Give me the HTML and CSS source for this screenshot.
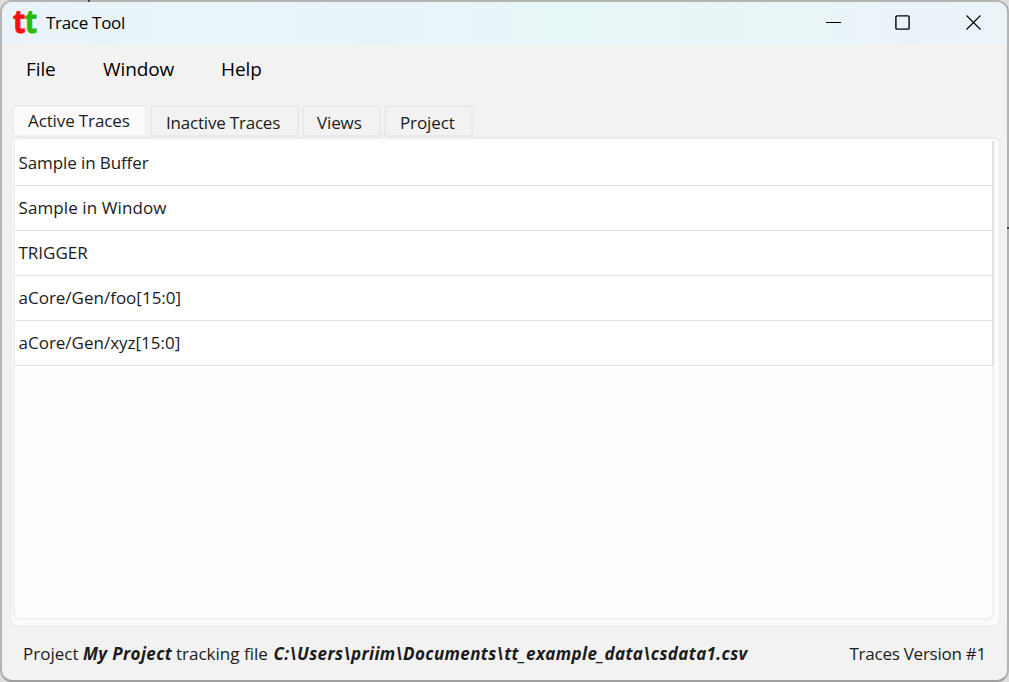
FILE: index.html
```html
<!DOCTYPE html>
<html lang="en">
<head>
<meta charset="utf-8">
<title>Trace Tool</title>
<link rel="stylesheet" href="styles.css">
</head>
<body>
<div class="desktop">
<div class="window">
  <header class="titlebar">
    <svg class="logo" width="28" height="43" viewBox="0 0 28 43"><g transform="scale(1 1.1)"><text class="logo-red" x="1" y="28.3">t</text><text class="logo-green" x="12.8" y="28.3">t</text></g></svg>
    <span class="title">Trace Tool</span>
    <svg class="control minimize" width="16" height="16"><path d="M0 8.5H15"/></svg>
    <svg class="control maximize" width="16" height="16"><rect x="0.9" y="0.9" width="13.2" height="13.2" rx="1.2"/></svg>
    <svg class="control close" width="16" height="16"><path d="M0.5 0.5L14.5 14.5M14.5 0.5L0.5 14.5"/></svg>
  </header>
  <nav class="menubar"><span class="menu file">File</span><span class="menu win">Window</span><span class="menu help">Help</span></nav>
  <div class="tabs">
    <div class="tab active"><span>Active Traces</span></div>
    <div class="tab inactive"><span>Inactive Traces</span></div>
    <div class="tab views"><span>Views</span></div>
    <div class="tab project"><span>Project</span></div>
  </div>
  <main class="pane">
    <div class="list">
      <div class="row"><span class="buffer">Sample in Buffer</span></div>
      <div class="row"><span class="swindow">Sample in Window</span></div>
      <div class="row"><span class="trigger">TRIGGER</span></div>
      <div class="row"><span class="foo">aCore/Gen/foo[15:0]</span></div>
      <div class="row"><span class="xyz">aCore/Gen/xyz[15:0]</span></div>
    </div>
  </main>
  <footer class="status">
    <span class="s1">Project</span><b class="s2">My Project</b><span class="s3">tracking file</span><b class="s4">C:\Users\priim\Documents\tt_example_data\csdata1.csv</b><span class="s5">Traces Version #1</span>
  </footer>
</div>
</div>
</body>
</html>
```
FILE: styles.css
```css
* { box-sizing: border-box; }
body { margin: 0; font-family: "Open Sans", "Noto Sans", sans-serif; font-size: 17px; color: #1b1b1b; }
.desktop { position: relative; width: 1009px; height: 682px; overflow: hidden; background: #dedede; }
.desktop::before, .desktop::after { content: ""; position: absolute; background: #444; width: 2px; height: 2px; }
.desktop::before { left: 88px; top: 0; }
.desktop::after { left: 1007px; top: 227px; }
.window { width: 1009px; height: 682px; border: 2px solid #b3b3b3; border-bottom-color: #a0a0a0; border-radius: 12px; background: #f2f2f2; overflow: hidden; display: flex; flex-direction: column; }
.titlebar { height: 43px; flex: none; display: flex; align-items: flex-start; background: linear-gradient(90deg, #eaf3fa 0%, #e8f5f9 20%, #e9f4fa 38%, #e7f6f7 55%, #e9f5f7 80%, #eaf3fa 90%, #ebf4f7 100%); color: #000; }
.logo { margin-left: 10px; flex: none; overflow: visible; }
.logo text { font-size: 28.5px; font-weight: 700; stroke-width: 0.8; stroke-linejoin: round; }
.logo-red { fill: #ff0d10; stroke: #ff0d10; }
.logo-green { fill: #2cba08; stroke: #2cba08; }
.title { margin-left: 6px; margin-top: 9px; line-height: 24px; white-space: nowrap; width: 90px; letter-spacing: -0.3px; }
.control { fill: none; stroke: #000; stroke-width: 1.2; flex: none; margin-top: 13px; }
.minimize { margin-left: 690px; margin-top: 12px; stroke-width: 1; }
.maximize { margin-left: 53px; stroke-width: 1.4; }
.close { margin-left: 55px; }
.menubar { height: 60px; flex: none; display: flex; padding-left: 24px; color: #000; font-size: 19px; line-height: 26px; padding-top: 11px; }
.menu { white-space: nowrap; letter-spacing: -0.1px; }
.file { width: 77px; }
.win { width: 118px; }
.tabs { height: 32px; flex: none; display: flex; padding-left: 10px; gap: 3px; align-items: stretch; }
.tab { border: 2px solid #e9e9e9; border-radius: 4px; line-height: 31px; padding-left: 14px; white-space: nowrap; letter-spacing: -0.12px; }
.tab span { display: block; }
.active { width: 135px; background: #fbfbfb; line-height: 27px; border-color: #eee; }
.inactive { width: 149px; letter-spacing: -0.2px; }
.views { width: 79px; padding-left: 13px; }
.project { width: 89px; }
.pane { margin: 0 6px 0 8px; height: 490px; flex: none; border: 2px solid #eee; border-radius: 7px; padding: 0 5px 5px 1px; background: #fbfbfb; }
.list { height: 481px; border: 2px solid #f0f0f0; border-top-color: #fbfbfb; border-radius: 7px; background: #fdfdfd; }
.row { height: 45px; margin-right: -2px; background: #fff; border-bottom: 1px solid #e0e0e0; border-right: 2px solid #e0e0e0; line-height: 44px; padding-left: 3.5px; white-space: nowrap; }
.buffer { letter-spacing: -0.1px; }
.swindow { letter-spacing: 0.1px; }
.status { height: 51px; display: flex; padding-left: 21px; line-height: 53px; white-space: nowrap; }
.status b { font-style: italic; letter-spacing: 0.38px; }
.s1 { width: 60px; }
.s2 { width: 93px; }
.s3 { width: 97.5px; }
.s4 { width: 576px; }
.s5 { letter-spacing: -0.25px; }
```
